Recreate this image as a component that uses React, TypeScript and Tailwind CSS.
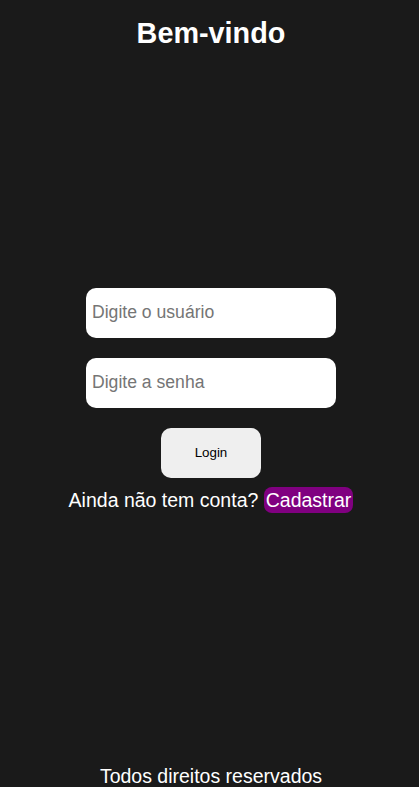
import React from "react";

export default function App() {
  return (
    <div
      className="min-h-[787px] w-full bg-[#1a1a1a] text-white flex flex-col items-center pl-[3px]"
      style={{ fontFamily: '"Liberation Sans", Arial, sans-serif' }}
    >
      <h1 className="mt-[17px] text-[28.8px] font-bold leading-[33px]">Bem-vindo</h1>
      <main className="flex-1 flex flex-col items-center justify-center pb-[17px]">
        <div className="flex flex-col items-center gap-[20px]">
          <input
            type="text"
            placeholder="Digite o usuário"
            className="w-[250px] h-[50px] rounded-[10px] bg-white px-[6px] text-[17.6px] text-black placeholder:text-[#757575] outline-none"
          />
          <input
            type="password"
            placeholder="Digite a senha"
            className="w-[250px] h-[50px] rounded-[10px] bg-white px-[6px] text-[17.6px] text-black placeholder:text-[#757575] outline-none"
          />
          <button className="w-[100px] h-[50px] rounded-[10px] bg-[#efefef] text-[13.33px] text-black">
            Login
          </button>
        </div>
        <p className="mt-[11px] text-[19.5px] leading-[22px]">
          Ainda não tem conta?{" "}
          <span className="bg-[#800080] rounded-[8px] px-[2px] py-[2px]">Cadastrar</span>
        </p>
      </main>
      <footer className="text-[19.5px] leading-[22px]">Todos direitos reservados</footer>
    </div>
  );
}
